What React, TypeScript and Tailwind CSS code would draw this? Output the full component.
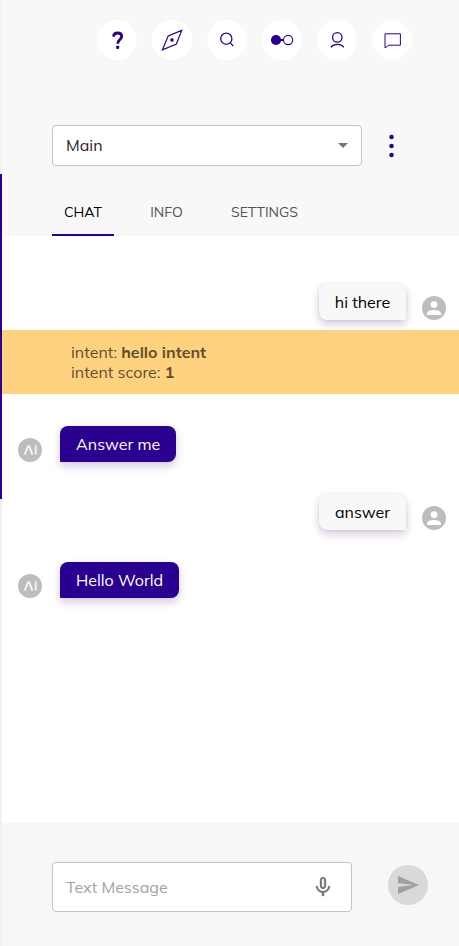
import type { ReactNode } from "react";

function RoundButton({ label, children }: { label: string; children: ReactNode }) {
  return (
    <button
      aria-label={label}
      className="flex h-10 w-10 shrink-0 items-center justify-center rounded-full bg-white text-[#29008f]"
    >
      <svg width="40" height="40" viewBox="0 0 40 40" fill="none" stroke="currentColor" strokeWidth="1.3">
        {children}
      </svg>
    </button>
  );
}

function Toolbar() {
  return (
    <nav className="flex gap-[15px] pt-5 pl-[95px]">
      <RoundButton label="Help">
        <path d="M16.5 16.7C16.7 14.2 18.4 13 20.6 13C23 13 24.7 14.3 24.7 16.5C24.7 19.4 20.7 19.8 20.7 23.8" strokeWidth="2.8" />
        <rect x="19.1" y="25.8" width="3.1" height="3.1" rx="0.8" fill="currentColor" stroke="none" />
      </RoundButton>
      <RoundButton label="Explore">
        <path d="M29.7 10.4L16.2 16L10.4 29.8L24.4 24Z" strokeWidth="1.2" />
        <circle cx="20" cy="20" r="1.8" fill="currentColor" stroke="none" />
      </RoundButton>
      <RoundButton label="Search">
        <circle cx="19.3" cy="18.7" r="5.6" />
        <path d="M23.2 22.7L26.2 26.2" />
      </RoundButton>
      <RoundButton label="Nodes">
        <circle cx="14" cy="20" r="5.1" fill="currentColor" stroke="none" />
        <path d="M18.5 20H21.5" strokeWidth="2" />
        <circle cx="26.1" cy="20" r="4.6" strokeWidth="1.1" />
      </RoundButton>
      <RoundButton label="Profile">
        <circle cx="20.3" cy="17.4" r="4.7" />
        <path d="M13.8 27.4C15.3 25.4 17.5 24.4 20.3 24.4C23.1 24.4 25.5 25.4 26.8 27.4" />
      </RoundButton>
      <RoundButton label="Chat">
        <path d="M13 13.8H28.4V25.2H16.8L13 28Z" strokeWidth="1" strokeLinejoin="round" />
      </RoundButton>
    </nav>
  );
}

function UserAvatar() {
  return (
    <svg className="shrink-0" width="24" height="24" viewBox="0 0 24 24">
      <circle cx="12" cy="12" r="12" fill="#bdbdbd" />
      <circle cx="12" cy="8.6" r="3.4" fill="#fff" />
      <path d="M5 19V17.4C5 14.9 9.2 13.9 12 13.9S19 14.9 19 17.4V19Z" fill="#fff" />
    </svg>
  );
}

function BotAvatar() {
  return (
    <svg className="shrink-0" width="24" height="24" viewBox="0 0 24 24" fill="none" stroke="#f1f1f1" strokeWidth="2">
      <circle cx="12" cy="12" r="12" fill="#bdbdbd" stroke="none" />
      <path d="M6.7 16.6L10 8.3H11.2L14.4 16.6M17.8 7.3V16.6" />
    </svg>
  );
}

function UserMessage({ children }: { children: ReactNode }) {
  return (
    <div className="flex items-end justify-end gap-4 pr-[13px]">
      <div className="flex h-9 w-[87px] items-center justify-center rounded-[8px] rounded-br-[1px] bg-[#f8f8f8] text-black shadow-[0_0_3px_rgba(70,0,90,0.08),0_4px_8px_rgba(70,0,90,0.22)]">
        {children}
      </div>
      <UserAvatar />
    </div>
  );
}

function BotMessage({ children }: { children: ReactNode }) {
  return (
    <div className="flex items-end gap-[18px] pl-4">
      <BotAvatar />
      <div className="flex h-9 items-center rounded-[8px] rounded-bl-[1px] bg-[#29008f] px-4 text-white shadow-[0_4px_8px_rgba(70,0,90,0.22)]">
        {children}
      </div>
    </div>
  );
}

export default function App() {
  return (
    <div className="flex h-[946px] w-full overflow-hidden bg-white font-['Mulish','Muli',Lato,sans-serif] text-base">
      <aside className="w-[2px] shrink-0 bg-[#f2f2f2] pt-[174px]">
        <div className="h-[325px] bg-[#29008f]" />
      </aside>
      <main className="flex min-w-0 flex-1 flex-col">
        <header className="flex h-[236px] shrink-0 flex-col bg-[#f8f8f8]">
          <Toolbar />
          <div className="mt-[65px] flex items-center pl-[50px]">
            <button className="flex h-[41px] w-[310px] items-center justify-between rounded-[4px] border border-[#c4c4c4] bg-white pr-[13px] pl-[13px] text-[#27222c]">
              <span className="pb-[2px]">Main</span>
              <svg width="10" height="5" viewBox="0 0 10 5"><path d="M0 0H10L5 5Z" fill="#757575" /></svg>
            </button>
            <button aria-label="More" className="ml-[27px] text-[#29008f]">
              <svg width="5" height="24" viewBox="0 0 5 24" fill="currentColor">
                <circle cx="2.5" cy="3" r="2.25" />
                <circle cx="2.5" cy="12" r="2.25" />
                <circle cx="2.5" cy="21" r="2.25" />
              </svg>
            </button>
          </div>
          <div className="mt-auto flex h-12 pl-[50px] text-sm text-[#55515a]">
            <div className="flex w-[62px] items-center justify-center border-b-2 border-[#29008f] pt-[2px] text-black">
              <span>CHAT</span>
            </div>
            <div className="ml-6 flex w-[57px] items-center justify-center">INFO</div>
            <div className="ml-6 flex w-[91px] items-center justify-center">SETTINGS</div>
          </div>
        </header>

        <section className="flex-1 pt-12">
          <UserMessage>hi there</UserMessage>
          <div className="relative mt-[10px] h-16 bg-[#ffd280] pt-3 pl-[69px] leading-5 text-[#624d30]">
            <p>intent: <b>hello intent</b></p>
            <p>intent score: <b>1</b></p>
          </div>
          <div className="mt-8"><BotMessage>Answer me</BotMessage></div>
          <div className="mt-8"><UserMessage>answer</UserMessage></div>
          <div className="mt-8"><BotMessage>Hello World</BotMessage></div>
        </section>

        <footer className="flex h-[123px] shrink-0 items-start bg-[#f7f7f7] pt-[39px] pl-[50px]">
          <div className="flex h-[50px] w-[300px] items-center justify-between rounded-[4px] border border-[#c4c4c4] bg-white pr-4 pl-[13px] text-[#a2a2a2]">
            <span>Text Message</span>
            <svg width="24" height="24" viewBox="0 0 24 24" fill="#757575" stroke="#757575" strokeWidth="0.3">
              <path d="M12 14c1.66 0 2.99-1.34 2.99-3L15 5c0-1.66-1.34-3-3-3S9 3.34 9 5v6c0 1.66 1.34 3 3 3zm-1.2-9.1c0-.66.54-1.2 1.2-1.2s1.2.54 1.2 1.2l-.01 6.2c0 .66-.53 1.2-1.19 1.2s-1.2-.54-1.2-1.2V4.9zm6.5 6.1c0 3-2.54 5.1-5.3 5.1S6.7 14 6.7 11H5c0 3.41 2.72 6.23 6 6.72V21h2v-3.28c3.28-.48 6-3.3 6-6.72h-1.7z" />
            </svg>
          </div>
          <button aria-label="Send" className="mt-[3px] ml-9 flex h-10 w-10 items-center justify-center rounded-full bg-[#d9d9d9]">
            <svg width="24" height="24" viewBox="0 0 24 24" fill="#a0a0a0"><path d="M2.01 21L23 12 2.01 3 2 10l15 2-15 2z" /></svg>
          </button>
        </footer>
      </main>
    </div>
  );
}
